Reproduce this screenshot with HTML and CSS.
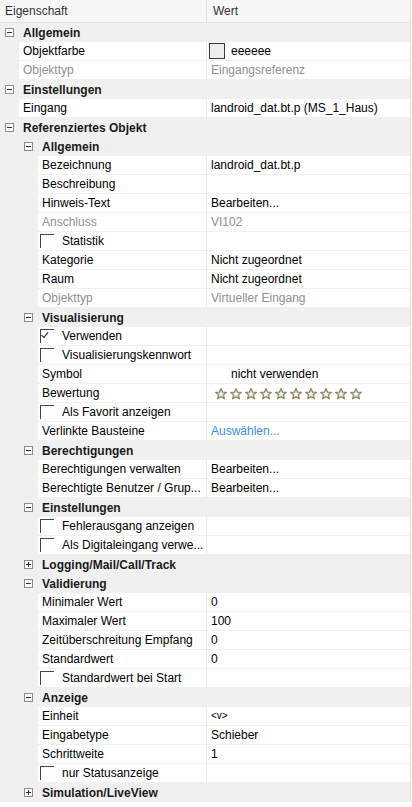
FILE: index.html
```html
<!DOCTYPE html>
<html lang="de">

<head>
  <meta charset="UTF-8" />
  <meta name="viewport" content="width=device-width, initial-scale=1.0" />
  <title>Eigenschaften</title>
  <link rel="stylesheet" href="styles.css">
</head>

<body>
  <div class="grid">
    <div class="head">
      <span class="name">Eigenschaft</span>
      <span class="val">Wert</span>
    </div>

    <!-- oberste Ebene -->
    <div class="group l0"><span class="tog"></span><b>Allgemein</b></div>
    <div class="prop l0">
      <span class="name">Objektfarbe</span>
      <span class="val"><i class="swatch"></i>eeeeee</span>
    </div>
    <div class="prop l0 off">
      <span class="name">Objekttyp</span>
      <span class="val">Eingangsreferenz</span>
    </div>

    <div class="group l0"><span class="tog"></span><b>Einstellungen</b></div>
    <div class="prop l0">
      <span class="name">Eingang</span>
      <span class="val">landroid_dat.bt.p (MS_1_Haus)</span>
    </div>

    <div class="group l0"><span class="tog"></span><b>Referenziertes Objekt</b></div>

    <!-- zweite Ebene -->
    <div class="group l1"><span class="tog"></span><b>Allgemein</b></div>
    <div class="prop l1"><span class="name">Bezeichnung</span><span class="val">landroid_dat.bt.p</span></div>
    <div class="prop l1"><span class="name">Beschreibung</span><span class="val"></span></div>
    <div class="prop l1"><span class="name">Hinweis-Text</span><span class="val">Bearbeiten...</span></div>
    <div class="prop l1 off"><span class="name">Anschluss</span><span class="val">VI102</span></div>
    <div class="prop l1"><span class="name"><i class="chk"></i>Statistik</span><span class="val"></span></div>
    <div class="prop l1"><span class="name">Kategorie</span><span class="val">Nicht zugeordnet</span></div>
    <div class="prop l1"><span class="name">Raum</span><span class="val">Nicht zugeordnet</span></div>
    <div class="prop l1 off"><span class="name">Objekttyp</span><span class="val">Virtueller Eingang</span></div>

    <div class="group l1"><span class="tog"></span><b>Visualisierung</b></div>
    <div class="prop l1"><span class="name"><i class="chk on"></i>Verwenden</span><span class="val"></span></div>
    <div class="prop l1"><span class="name"><i class="chk"></i>Visualisierungskennwort</span><span class="val"></span></div>
    <div class="prop l1"><span class="name">Symbol</span><span class="val"><span class="sym">nicht verwenden</span></span></div>
    <div class="prop l1">
      <span class="name">Bewertung</span>
      <span class="val stars" id="stars"></span>
    </div>
    <div class="prop l1"><span class="name"><i class="chk"></i>Als Favorit anzeigen</span><span class="val"></span></div>
    <div class="prop l1"><span class="name">Verlinkte Bausteine</span><span class="val link">Auswählen...</span></div>

    <div class="group l1"><span class="tog"></span><b>Berechtigungen</b></div>
    <div class="prop l1"><span class="name">Berechtigungen verwalten</span><span class="val">Bearbeiten...</span></div>
    <div class="prop l1"><span class="name">Berechtigte Benutzer / Grup...</span><span class="val">Bearbeiten...</span></div>

    <div class="group l1"><span class="tog"></span><b>Einstellungen</b></div>
    <div class="prop l1"><span class="name"><i class="chk"></i>Fehlerausgang anzeigen</span><span class="val"></span></div>
    <div class="prop l1"><span class="name"><i class="chk"></i>Als Digitaleingang verwe...</span><span class="val"></span></div>

    <div class="group l1"><span class="tog plus"></span><b>Logging/Mail/Call/Track</b></div>

    <div class="group l1"><span class="tog"></span><b>Validierung</b></div>
    <div class="prop l1"><span class="name">Minimaler Wert</span><span class="val">0</span></div>
    <div class="prop l1"><span class="name">Maximaler Wert</span><span class="val">100</span></div>
    <div class="prop l1"><span class="name">Zeitüberschreitung Empfang</span><span class="val">0</span></div>
    <div class="prop l1"><span class="name">Standardwert</span><span class="val">0</span></div>
    <div class="prop l1"><span class="name"><i class="chk"></i>Standardwert bei Start</span><span class="val"></span></div>

    <div class="group l1"><span class="tog"></span><b>Anzeige</b></div>
    <div class="prop l1"><span class="name">Einheit</span><span class="val small">&lt;v&gt;</span></div>
    <div class="prop l1"><span class="name">Eingabetype</span><span class="val">Schieber</span></div>
    <div class="prop l1"><span class="name">Schrittweite</span><span class="val">1</span></div>
    <div class="prop l1"><span class="name"><i class="chk"></i>nur Statusanzeige</span><span class="val"></span></div>

    <div class="group l1"><span class="tog plus"></span><b>Simulation/LiveView</b></div>
  </div>

  <script>
    // zehn leere Sterne fuer die Bewertung
    const stern = `<svg width="12" height="12" viewBox="0 0 12 12"><path d="M6 0.6 L7.6 4.1 L11.4 4.4 L8.5 6.9 L9.4 10.8 L6 8.8 L2.6 10.8 L3.5 6.9 L0.6 4.4 L4.4 4.1 Z" fill="#ddd8c6" stroke="#8c846a" stroke-width="1.2" stroke-linejoin="round"/><path d="M6 3.6 L6.7 5.3 L8.4 5.4 L7.1 6.5 L7.5 8.1 L6 7.3 L4.5 8.1 L4.9 6.5 L3.6 5.4 L5.3 5.3 Z" fill="#f7f5ee"/></svg>`;
    document.getElementById("stars").innerHTML = stern.repeat(10);
  </script>
</body>

</html>
```

FILE: styles.css
```css
* {
  margin: 0px;
  padding: 0px;
  box-sizing: border-box;
}

body {
  font-family: "Liberation Sans", Arial, sans-serif;
  font-size: 12px;
  color: #000;
  background: #fff;
}

.grid {
  width: 411px;
  background-color: #f0f0f0;
  border-right: 1px solid #dcdcdc;
}

.head {
  display: grid;
  grid-template-columns: 206px 1fr;
  height: 23px;
  line-height: 22px;
  background-color: #f7f7f7;
  border-bottom: 1px solid #e3e3e3;
  color: #333;
}

.head .name {
  padding-left: 5px;
}

.head .val {
  border-left: 1px solid #e3e3e3;
  padding-left: 6px;
}

/* Gruppenzeilen mit Auf-/Zuklappen */
.group {
  display: flex;
  align-items: center;
  height: 19px;
  background-color: #f0f0f0;
  color: #1a1a1a;
}

.group b {
  font-weight: bold;
}

.group.l0 {
  padding-left: 5px;
}

.group.l1 {
  padding-left: 24px;
}

.tog {
  position: relative;
  width: 9px;
  height: 9px;
  border: 1px solid #8c8c8c;
  background: #fff;
  margin-right: 9px;
}

.tog::before {
  content: "";
  position: absolute;
  left: 1px;
  top: 3px;
  width: 5px;
  height: 1px;
  background: #333;
}

.tog.plus::after {
  content: "";
  position: absolute;
  left: 3px;
  top: 1px;
  width: 1px;
  height: 5px;
  background: #333;
}

/* Eigenschaftszeilen */
.prop {
  display: grid;
  grid-template-columns: 206px 1fr;
  height: 19px;
  line-height: 18px;
}

.prop .name,
.prop .val {
  display: flex;
  align-items: center;
  height: 19px;
  background-color: #fff;
  border-bottom: 1px solid #f0f0f0;
  white-space: nowrap;
  overflow: hidden;
}

.prop.l0 .name {
  margin-left: 19px;
  padding-left: 4px;
}

.prop.l1 .name {
  margin-left: 38px;
  padding-left: 4px;
}

.prop .val {
  border-left: 1px solid #ebebeb;
  padding-left: 4px;
}

.off .name,
.off .val {
  color: #8e8e8e;
}

.link {
  color: #3b8ee8;
}

.small {
  font-size: 10px;
}

.sym {
  padding-left: 20px;
}

.swatch {
  display: inline-block;
  width: 16px;
  height: 16px;
  border: 1px solid #3a3a3a;
  background: #eeeeee;
  margin-left: -2px;
  margin-right: 6px;
}

.stars {
  gap: 3px;
  padding-top: 1px;
}

.stars svg {
  flex: none;
}

.stars svg:first-child {
  margin-left: 4px;
}

/* Kontrollkaestchen: nur oben und links gezeichnet */
.chk {
  position: relative;
  display: inline-block;
  width: 14px;
  height: 14px;
  border-top: 1px solid #444;
  border-left: 1px solid #444;
  margin-left: -2px;
  margin-right: 8px;
  margin-top: 2px;
  align-self: flex-start;
}

.chk.on::after {
  content: "";
  position: absolute;
  left: 3px;
  top: 4px;
  width: 6px;
  height: 3px;
  border-left: 1px solid #222;
  border-bottom: 1px solid #222;
  transform: rotate(-50deg);
  transform-origin: left bottom;
}
```
